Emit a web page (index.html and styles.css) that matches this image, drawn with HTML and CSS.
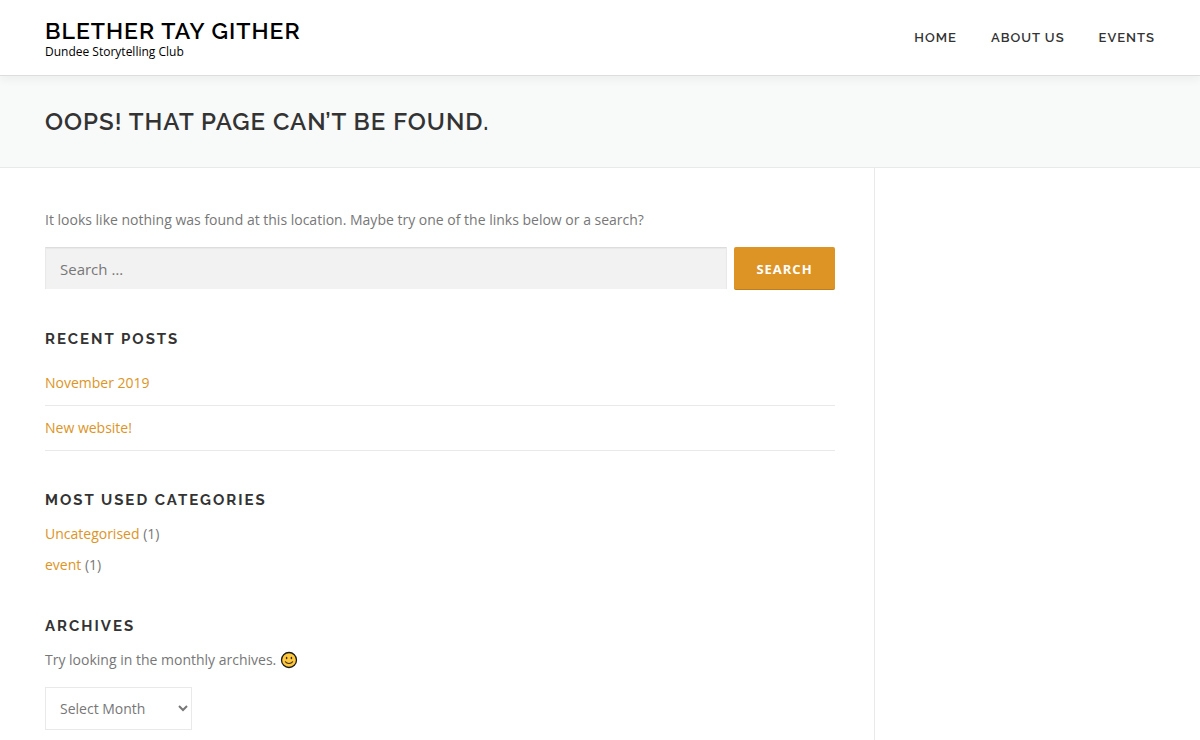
FILE: index.html
```html
<!DOCTYPE html>
<html lang="en-GB">
<head>
    <meta charset="UTF-8">
    <meta name="viewport" content="width=device-width, initial-scale=1">
    <title>Page not found – Blether Tay Gither</title>
    <link rel="stylesheet" href="styles.css">
</head>
<body>
    <header class="site-header">
        <div class="site-branding">
            <p class="site-title"><a href="#">Blether Tay Gither</a></p>
            <p class="site-description">Dundee Storytelling Club</p>
        </div>
        <nav class="main-navigation">
            <ul>
                <li><a href="#">Home</a></li>
                <li><a href="#">About Us</a></li>
                <li><a href="#">Events</a></li>
            </ul>
        </nav>
    </header>

    <div class="page-header">
        <h1>Oops! That page can’t be found.</h1>
    </div>

    <div class="site-content">
        <main class="content-area">
            <p class="intro">It looks like nothing was found at this location. Maybe try one of the links below or a search?</p>

            <form class="search-form" role="search">
                <input type="search" class="search-field" placeholder="Search …" aria-label="Search for:">
                <button type="submit" class="search-submit">Search</button>
            </form>

            <section class="widget recent-posts">
                <h2 class="widget-title">Recent Posts</h2>
                <ul>
                    <li><a href="#">November 2019</a></li>
                    <li><a href="#">New website!</a></li>
                </ul>
            </section>

            <section class="widget categories">
                <h2 class="widget-title">Most Used Categories</h2>
                <ul>
                    <li><a href="#">Uncategorised</a> (1)</li>
                    <li><a href="#">event</a> (1)</li>
                </ul>
            </section>

            <section class="widget archives">
                <h2 class="widget-title" id="archives-title">Archives</h2>
                <p>Try looking in the monthly archives.
                    <svg class="smiley" viewBox="0 0 18 18" role="img" aria-label="smile">
                        <circle cx="9" cy="9" r="7.5" fill="#ffc83d" stroke="#1b1b1b" stroke-width="1.3"/>
                        <ellipse cx="6.6" cy="7" rx="0.8" ry="1.3" fill="#3b2a10"/>
                        <ellipse cx="11.4" cy="7" rx="0.8" ry="1.3" fill="#3b2a10"/>
                        <path d="M5.4 10.8c1.5 2.3 5.7 2.3 7.2 0" fill="none" stroke="#3b2a10" stroke-width="1.1" stroke-linecap="round"/>
                    </svg>
                </p>
                <select aria-labelledby="archives-title">
                    <option>Select Month</option>
                    <option>November 2019</option>
                </select>
            </section>
        </main>
        <aside class="sidebar"></aside>
    </div>
</body>
</html>
```
FILE: styles.css
```css
* {
    box-sizing: border-box;
}

body {
    margin: 0;
    min-height: 100vh;
    display: flex;
    flex-direction: column;
    background: #fff;
    color: #777;
    font-family: "Open Sans", "Noto Sans", sans-serif;
    font-size: 14px;
    line-height: 24px;
}

h1, h2, p, ul {
    margin: 0;
    padding: 0;
}

ul {
    list-style: none;
}

a {
    color: #dd9425;
    text-decoration: none;
}

/* Header */
.site-header {
    position: relative;
    display: flex;
    justify-content: space-between;
    align-items: center;
    height: 76px;
    padding: 0 45px;
    background: #fff;
    border-bottom: 1px solid #ddd;
    box-shadow: 0 5px 8px rgba(0, 0, 0, 0.04);
}

.site-branding {
    padding-top: 2px;
}

.site-title {
    font-family: Raleway, Lato, sans-serif;
    font-size: 23px;
    font-weight: 600;
    line-height: 26px;
    letter-spacing: 1px;
    text-transform: uppercase;
}

.site-title a {
    color: #000;
}

.site-description {
    color: #000;
    font-size: 12px;
    line-height: 16px;
}

.main-navigation ul {
    display: flex;
    gap: 34px;
}

.main-navigation a {
    color: #333;
    font-family: Raleway, Lato, sans-serif;
    font-size: 13px;
    font-weight: 600;
    letter-spacing: 1px;
    text-transform: uppercase;
}

/* Page title */
.page-header {
    padding: 30px 45px;
    background: #f8f9f9;
    border-bottom: 1px solid #e9e9e9;
}

.page-header h1 {
    color: #333;
    font-family: Raleway, Lato, sans-serif;
    font-size: 24px;
    font-weight: 600;
    line-height: 31px;
    letter-spacing: 1px;
    text-transform: uppercase;
}

/* Content */
.site-content {
    flex: 1;
    display: flex;
    padding: 0 45px;
}

.content-area {
    flex: 1;
    padding: 40px 39px 10px 0;
    border-right: 1px solid #e9e9e9;
}

.sidebar {
    width: 280px;
}

.search-form {
    display: flex;
    gap: 7px;
    margin-top: 15px;
}

.search-field {
    flex: 1;
    min-width: 0;
    height: 42px;
    padding: 0 14px;
    background: #f2f2f2;
    border: 1px solid #e9e9e9;
    border-top-color: #ddd;
    border-bottom: 0;
    border-radius: 0;
    box-shadow: inset 0 1px 1px rgba(0, 0, 0, 0.04);
    color: #777;
    font: inherit;
    font-size: 15px;
    appearance: none;
}

.search-field::placeholder {
    color: #777;
}

.search-submit {
    width: 101px;
    height: 43px;
    padding: 0;
    background: #dd9425;
    border: 0;
    border-radius: 2px;
    box-shadow: inset 0 -1px 0 rgba(0, 0, 0, 0.15);
    color: #fff;
    font-family: inherit;
    font-size: 13px;
    font-weight: 700;
    letter-spacing: 1px;
    text-transform: uppercase;
}

.widget {
    margin-top: 37px;
}

.widget-title {
    color: #333;
    font-family: Raleway, Lato, sans-serif;
    font-size: 15px;
    font-weight: 700;
    line-height: 24px;
    letter-spacing: 2px;
    text-transform: uppercase;
}

.recent-posts ul {
    margin-top: 10px;
}

.recent-posts li {
    padding: 10px 0;
    border-bottom: 1px solid #e9e9e9;
}

.categories ul {
    display: grid;
    gap: 7px;
    margin-top: 10px;
}

.archives p {
    margin: 10px 0 15px;
}

.smiley {
    width: 18px;
    height: 18px;
    vertical-align: -4px;
}

.archives select {
    width: 147px;
    height: 43px;
    padding: 0 0 0 10px;
    background: #fff;
    border: 1px solid #e9e9e9;
    border-radius: 0;
    color: #777;
    font: inherit;
}
```
